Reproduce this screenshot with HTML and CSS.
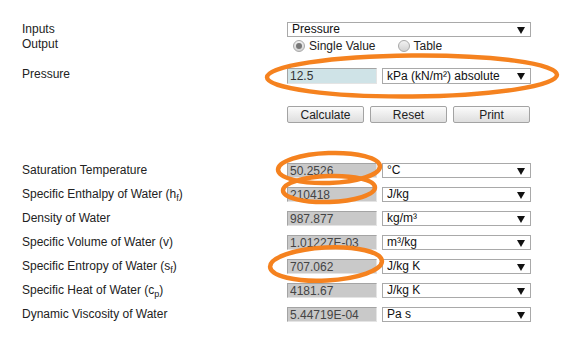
FILE: index.html
```html
<!DOCTYPE html>
<html lang="en">
<head>
  <meta charset="UTF-8">
  <title>Saturated Water Properties by Pressure</title>
  <link rel="stylesheet" href="styles.css">
</head>
<body>
  <div class="calc">
    <div class="row row-inputs">
      <div class="label">Inputs</div>
      <div class="pick wide">
        <select><option>Pressure</option></select>
      </div>
    </div>

    <div class="row row-output">
      <div class="label">Output</div>
      <div class="radios">
        <label class="radio"><input type="radio" name="mode" checked> Single Value</label>
        <label class="radio"><input type="radio" name="mode"> Table</label>
      </div>
    </div>

    <div class="row row-pressure">
      <div class="label">Pressure</div>
      <div class="controls">
        <input class="value entry" type="text" value="12.5">
        <div class="pick"><select><option>kPa (kN/m²) absolute</option></select></div>
      </div>
    </div>

    <div class="row row-buttons">
      <div class="label"></div>
      <div class="buttons">
        <button>Calculate</button>
        <button>Reset</button>
        <button>Print</button>
      </div>
    </div>

    <div class="results">
      <div class="row result">
        <div class="label">Saturation Temperature</div>
        <div class="controls">
          <input class="value" type="text" value="50.2526" readonly>
          <div class="pick"><select><option>°C</option></select></div>
        </div>
      </div>
      <div class="row result">
        <div class="label">Specific Enthalpy of Water (h<sub>f</sub>)</div>
        <div class="controls">
          <input class="value" type="text" value="210418" readonly>
          <div class="pick"><select><option>J/kg</option></select></div>
        </div>
      </div>
      <div class="row result">
        <div class="label">Density of Water</div>
        <div class="controls">
          <input class="value" type="text" value="987.877" readonly>
          <div class="pick"><select><option>kg/m³</option></select></div>
        </div>
      </div>
      <div class="row result">
        <div class="label">Specific Volume of Water (v)</div>
        <div class="controls">
          <input class="value" type="text" value="1.01227E-03" readonly>
          <div class="pick"><select><option>m³/kg</option></select></div>
        </div>
      </div>
      <div class="row result">
        <div class="label">Specific Entropy of Water (s<sub>f</sub>)</div>
        <div class="controls">
          <input class="value" type="text" value="707.062" readonly>
          <div class="pick"><select><option>J/kg K</option></select></div>
        </div>
      </div>
      <div class="row result">
        <div class="label">Specific Heat of Water (c<sub>p</sub>)</div>
        <div class="controls">
          <input class="value" type="text" value="4181.67" readonly>
          <div class="pick"><select><option>J/kg K</option></select></div>
        </div>
      </div>
      <div class="row result">
        <div class="label">Dynamic Viscosity of Water</div>
        <div class="controls">
          <input class="value" type="text" value="5.44719E-04" readonly>
          <div class="pick"><select><option>Pa s</option></select></div>
        </div>
      </div>
    </div>
  </div>

  <!-- hand-drawn highlight marks over the form -->
  <svg class="marks" width="563" height="364" viewBox="0 0 563 364">
    <ellipse cx="412" cy="76" rx="145" ry="20.5" transform="rotate(-0.5 412 76)"/>
    <ellipse cx="329" cy="168" rx="51" ry="15" transform="rotate(-2 329 168)"/>
    <ellipse cx="329" cy="189" rx="46" ry="13" transform="rotate(-2 329 189)"/>
    <ellipse cx="326" cy="264" rx="56" ry="16.5" transform="rotate(-3 326 264)"/>
  </svg>
</body>
</html>
```

FILE: styles.css
```css
* { box-sizing: border-box; }
body {
  margin: 0;
  font-family: 'Liberation Sans', Arial, sans-serif;
  font-size: 12px;
  color: #222;
  background: #fff;
  position: relative;
}

.calc {
  padding: 22px 0 0 22px;
}

/* Each line: label column + controls */
.row {
  display: flex;
  align-items: flex-start;
}
.label {
  width: 265px;
  flex: none;
  line-height: 15px;
}
.label sub {
  font-size: 9px;
  line-height: 0;
  vertical-align: -3px;
}

.row-output .label { line-height: 14px; }
.row-pressure { margin-top: 13px; }
.row-pressure .label { line-height: 14px; padding-top: 1px; }
.row-pressure .controls { margin-top: 2px; }
.row-buttons { margin-top: 22px; }
.results { margin-top: 40px; }
.result { margin-bottom: 9px; }

.controls {
  display: flex;
  gap: 5px;
}

/* Select boxes */
.pick {
  position: relative;
  width: 149px;
  height: 15px;
}
.pick.wide { width: 244px; }
.row-pressure .pick { height: 16px; }
.pick select {
  appearance: none;
  -webkit-appearance: none;
  width: 100%;
  height: 100%;
  margin: 0;
  padding: 0 14px 0 4px;
  border: 1px solid #a9a9a9;
  border-radius: 0;
  background: #fff;
  font: inherit;
  color: #111;
  line-height: 13px;
}
.pick:after {
  content: "";
  position: absolute;
  right: 6px;
  top: 50%;
  margin-top: -3px;
  border-left: 4px solid transparent;
  border-right: 4px solid transparent;
  border-top: 7px solid #111;
  pointer-events: none;
}

/* Value fields */
.value {
  width: 90px;
  height: 15px;
  margin: 0;
  padding: 0 2px;
  border: 1px solid;
  border-color: #a4a4a4 #e4e4e4 #e4e4e4 #a4a4a4;
  background: #c9c9c9;
  font: inherit;
  color: #444;
  outline: none;
}
.value.entry {
  height: 16px;
  background: #cfe3e7;
  color: #333;
}

/* Radio buttons */
.radios {
  display: flex;
  gap: 22px;
  margin: 2px 0 0 6px;
  height: 14px;
  align-items: center;
}
.radio {
  display: flex;
  align-items: center;
  gap: 4px;
  font-size: 12px;
  color: #222;
}
.radio input {
  appearance: none;
  -webkit-appearance: none;
  width: 12px;
  height: 12px;
  margin: 0;
  border: 1px solid #a8a8a8;
  border-radius: 50%;
  background: linear-gradient(#f2f2f2, #d2d2d2);
  position: relative;
}
.radio input:checked:after {
  content: "";
  position: absolute;
  left: 2px;
  top: 2px;
  width: 6px;
  height: 6px;
  border-radius: 50%;
  background: #777;
}

/* Buttons */
.buttons {
  display: flex;
  gap: 6px;
}
.buttons button {
  width: 77px;
  height: 17px;
  padding: 0;
  border: 1px solid #a3a3a3;
  border-radius: 2px;
  background: linear-gradient(#fbfbfb, #dedede);
  font: inherit;
  color: #222;
}

/* Orange highlight rings */
.marks {
  position: absolute;
  top: 0;
  left: 0;
  pointer-events: none;
}
.marks ellipse {
  fill: none;
  stroke: #f5821f;
  stroke-width: 4.5;
}
```
